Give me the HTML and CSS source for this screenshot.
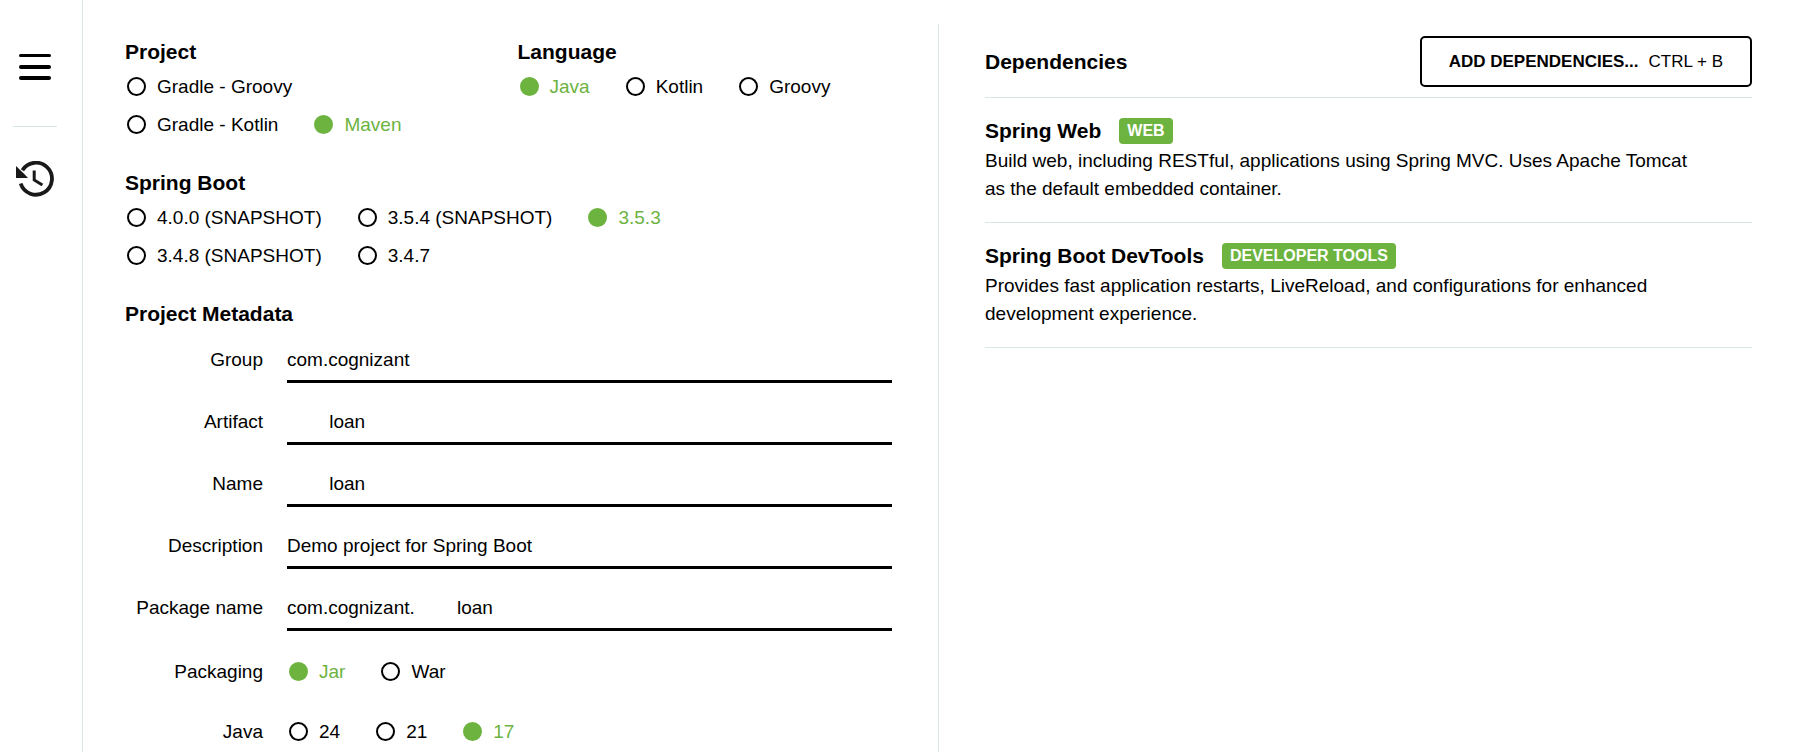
FILE: index.html
```html
<!DOCTYPE html>
<html lang="en">
<head>
<meta charset="utf-8">
<title>Spring Initializr</title>
<link rel="stylesheet" href="styles.css">
</head>
<body>
<div class="page">
  <aside class="sidebar">
    <button class="icon-button" type="button" aria-label="Menu">
      <svg width="32" height="26" viewBox="0 0 32 26"><rect width="32" height="3" rx="1.5"/><rect y="11" width="32" height="4" rx="2"/><rect y="22" width="32" height="4" rx="2"/></svg>
    </button>
    <hr class="sidebar-rule">
    <button class="icon-button" type="button" aria-label="History">
      <svg width="38" height="36" viewBox="0 0 38 36"><path d="M4.7 22.5A16 16 0 1 0 6.4 9.2" fill="none" stroke="#191919" stroke-width="3.8"/><path d="M0 5V17H12L7.8 12.4L6.2 11Z" fill="#191919"/><path d="M18.2 9.5V19L26.4 24" fill="none" stroke="#191919" stroke-width="3"/></svg>
    </button>
  </aside>
  <main class="content">
    <form class="settings">
      <div class="pair">
        <section role="radiogroup" aria-labelledby="h-project">
          <h2 class="heading" id="h-project">Project</h2>
          <div class="options project-options">
            <label class="option"><input type="radio" name="project"><span>Gradle - Groovy</span></label>
            <label class="option"><input type="radio" name="project"><span>Gradle - Kotlin</span></label>
            <label class="option"><input type="radio" name="project" checked><span>Maven</span></label>
          </div>
        </section>
        <section role="radiogroup" aria-labelledby="h-language">
          <h2 class="heading" id="h-language">Language</h2>
          <div class="options">
            <label class="option"><input type="radio" name="language" checked><span>Java</span></label>
            <label class="option"><input type="radio" name="language"><span>Kotlin</span></label>
            <label class="option"><input type="radio" name="language"><span>Groovy</span></label>
          </div>
        </section>
      </div>
      <section role="radiogroup" aria-labelledby="h-boot">
        <h2 class="heading" id="h-boot">Spring Boot</h2>
        <div class="options boot-options">
          <label class="option"><input type="radio" name="boot"><span>4.0.0 (SNAPSHOT)</span></label>
          <label class="option"><input type="radio" name="boot"><span>3.5.4 (SNAPSHOT)</span></label>
          <label class="option"><input type="radio" name="boot" checked><span>3.5.3</span></label>
          <label class="option"><input type="radio" name="boot"><span>3.4.8 (SNAPSHOT)</span></label>
          <label class="option"><input type="radio" name="boot"><span>3.4.7</span></label>
        </div>
      </section>
      <section>
        <h2 class="heading">Project Metadata</h2>
        <div class="fields">
          <label class="field-label" for="group">Group</label>
          <input class="field-input" id="group" type="text" value="com.cognizant">
          <label class="field-label" for="artifact">Artifact</label>
          <input class="field-input" id="artifact" type="text" value="        loan">
          <label class="field-label" for="name">Name</label>
          <input class="field-input" id="name" type="text" value="        loan">
          <label class="field-label" for="description">Description</label>
          <input class="field-input" id="description" type="text" value="Demo project for Spring Boot">
          <label class="field-label" for="package">Package name</label>
          <input class="field-input" id="package" type="text" value="com.cognizant.        loan">
        </div>
        <div class="fields choices">
          <span class="choice-label" id="l-packaging">Packaging</span>
          <div class="options" role="radiogroup" aria-labelledby="l-packaging">
            <label class="option"><input type="radio" name="packaging" checked><span>Jar</span></label>
            <label class="option"><input type="radio" name="packaging"><span>War</span></label>
          </div>
          <span class="choice-label" id="l-java">Java</span>
          <div class="options" role="radiogroup" aria-labelledby="l-java">
            <label class="option"><input type="radio" name="java"><span>24</span></label>
            <label class="option"><input type="radio" name="java"><span>21</span></label>
            <label class="option"><input type="radio" name="java" checked><span>17</span></label>
          </div>
        </div>
      </section>
    </form>
    <section class="dependencies">
      <header class="dependencies-header">
        <h2 class="heading">Dependencies</h2>
        <button class="add-button" type="button"><b>Add dependencies...</b><span>Ctrl + B</span></button>
      </header>
      <ul class="dependency-list">
        <li class="dependency">
          <div class="dependency-title"><h3 class="heading">Spring Web</h3><span class="badge">Web</span></div>
          <p class="dependency-text">Build web, including RESTful, applications using Spring MVC. Uses Apache Tomcat as the default embedded container.</p>
        </li>
        <li class="dependency">
          <div class="dependency-title"><h3 class="heading">Spring Boot DevTools</h3><span class="badge">Developer Tools</span></div>
          <p class="dependency-text">Provides fast application restarts, LiveReload, and configurations for enhanced development experience.</p>
        </li>
      </ul>
    </section>
  </main>
</div>
</body>
</html>
```

FILE: styles.css
```css
* {
  box-sizing: border-box;
}

body {
  margin: 0;
  background: #fff;
  color: #000;
  font: 19px/28px "Liberation Sans", Arial, sans-serif;
}

.page {
  display: flex;
  min-height: 100vh;
}

.sidebar {
  flex: none;
  display: flex;
  flex-direction: column;
  align-items: center;
  width: 83px;
  padding: 54px 12px 0 0;
  border-right: 1px solid #dbe6e6;
}

.icon-button {
  display: flex;
  padding: 0;
  border: 0;
  background: none;
  cursor: pointer;
}

.sidebar-rule {
  width: 44px;
  margin: 46px 0 34px;
  border: 0;
  border-top: 1px solid #d5e6e6;
}

.content {
  flex: 1;
  display: grid;
  grid-template-columns: 1fr 1fr;
  padding-top: 24px;
}

.settings {
  display: flex;
  flex-direction: column;
  gap: 27px;
  padding: 15px 47px 0 42px;
}

.pair {
  display: grid;
  grid-template-columns: 1fr 1fr;
  column-gap: 18px;
}

.heading {
  margin: 0;
  font-size: 21px;
  line-height: 26px;
}

.options {
  display: flex;
  flex-wrap: wrap;
  gap: 1px 34px;
}

.heading + .options {
  margin-top: 3px;
}

.project-options {
  max-width: 320px;
}

.boot-options {
  max-width: 600px;
}

.option {
  display: flex;
  align-items: center;
  gap: 11px;
  height: 37px;
  cursor: pointer;
}

.option input {
  appearance: none;
  width: 19px;
  height: 19px;
  margin: 0 0 0 2px;
  border: 2px solid #000;
  border-radius: 50%;
}

.option input:checked {
  border-color: #6db33f;
  background: #6db33f;
}

.option input:checked + span {
  color: #6db33f;
}

.fields {
  display: grid;
  grid-template-columns: 138px 1fr;
  gap: 16px 24px;
  margin-top: 10px;
}

.field-label,
.choice-label {
  text-align: right;
}

.field-label {
  padding-top: 9px;
}

.field-input {
  width: 100%;
  min-width: 0;
  height: 46px;
  padding: 2px 0 0;
  border: 0;
  border-bottom: 3px solid #000;
  border-radius: 0;
  background: none;
  color: inherit;
  font: inherit;
  outline: 0;
}

.choices {
  row-gap: 23px;
  margin-top: 22px;
  align-items: center;
}

.dependencies {
  margin-left: -1px;
  padding: 12px 43px 0 46px;
  border-left: 1px solid #dbe6e6;
}

.dependencies-header {
  display: flex;
  align-items: center;
  justify-content: space-between;
  padding-bottom: 10px;
  border-bottom: 1px solid #dbe6e6;
}

.add-button {
  display: flex;
  align-items: center;
  gap: 10px;
  height: 51px;
  padding: 0 27px;
  border: 2px solid #000;
  border-radius: 5px;
  background: #fff;
  color: #000;
  font: inherit;
  font-size: 17px;
  text-transform: uppercase;
  cursor: pointer;
}

.dependency-list {
  margin: 0;
  padding: 0;
  list-style: none;
}

.dependency {
  padding: 20px 60px 19px 0;
  border-bottom: 1px solid #dbe6e6;
}

.dependency-title {
  display: flex;
  align-items: center;
  gap: 18px;
}

.badge {
  padding: 0 8px;
  border-radius: 4px;
  background: #6db33f;
  color: #fff;
  font-size: 16px;
  font-weight: bold;
  line-height: 26px;
  text-transform: uppercase;
}

.dependency-text {
  margin: 3px 0 0;
}
```
